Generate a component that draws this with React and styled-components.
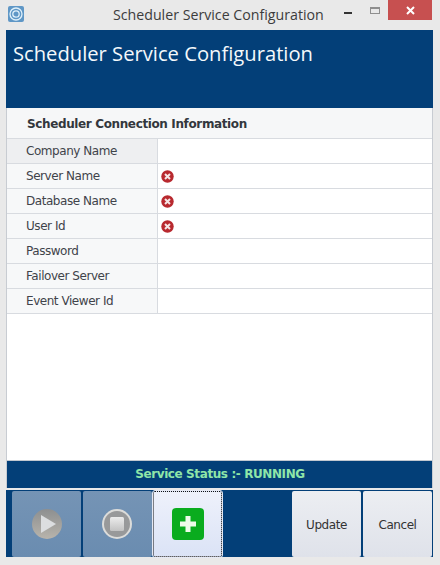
import React from "react";
import styled, { createGlobalStyle } from "styled-components";

const GlobalStyle = createGlobalStyle`
  html, body {
    margin: 0;
    padding: 0;
    background: #ececec;
  }
  #root {
    width: 440px;
    height: 565px;
    overflow: hidden;
  }
`;

const Window = styled.div`
  width: 440px;
  height: 565px;
  box-sizing: border-box;
  background: #e9e9e9;
  display: flex;
  flex-direction: column;
`;

const TitleBar = styled.div`
  height: 30px;
  flex: none;
  display: grid;
  grid-template-columns: 8px 16px 89px 224px 1fr;
  align-items: center;
`;

const AppIcon = styled.svg`
  grid-column: 2;
  width: 16px;
  height: 16px;
  margin-top: -2px;
`;

const WindowTitle = styled.div`
  grid-column: 4;
  font: 14.2px "Open Sans", sans-serif;
  color: #3c3c3c;
  white-space: nowrap;
  margin-top: -1px;
`;

const WindowButtons = styled.div`
  grid-column: 5;
  align-self: start;
  display: flex;
  align-items: flex-start;
  padding-left: 7px;
`;

const MinButton = styled.div`
  width: 8px;
  height: 2px;
  background: #333;
  margin-top: 12px;
`;

const MaxButton = styled.div`
  width: 10px;
  height: 7px;
  box-sizing: border-box;
  border: 1px solid #8f8f8f;
  border-top-width: 2px;
  margin: 7px 0 0 18px;
`;

const CloseButton = styled.div`
  width: 44px;
  height: 20px;
  margin-left: 8px;
  background: #c75050;
  color: #fff;
  display: flex;
  align-items: center;
  justify-content: center;
`;

const Content = styled.div`
  flex: 1;
  margin: 0 7px 0 6px;
  display: flex;
  flex-direction: column;
  min-height: 0;
`;

const Header = styled.div`
  height: 78px;
  flex: none;
  background: #033f78;
  color: #f4f8fb;
  font: 20.2px "Open Sans", sans-serif;
  padding: 9px 0 0 7px;
  box-sizing: border-box;
  line-height: 28px;
`;

const Panel = styled.div`
  flex: 1;
  background: #fff;
  border-left: 1px solid #c8ccd2;
  border-right: 1px solid #c8ccd2;
  min-height: 0;
  display: flex;
  flex-direction: column;
`;

const Rows = styled.div`
  flex: 1;
`;

const SectionTitle = styled.div`
  height: 31px;
  box-sizing: border-box;
  background: #f6f7f8;
  border-bottom: 1px solid #d8dbe0;
  padding: 1px 0 0 20px;
  font: bold 12px/30px "DejaVu Sans", sans-serif;
  letter-spacing: -0.37px;
  color: #33373d;
`;

const Row = styled.div`
  display: grid;
  grid-template-columns: 151px 1fr;
  height: 25px;
  box-sizing: border-box;
  border-bottom: 1px solid #d8dbe0;
`;

const Label = styled.div`
  background: ${(p) => (p.$active ? "#eeeff1" : "#f7f8f9")};
  border-right: 1px solid #d8dbe0;
  padding-left: 19px;
  font: 12px/24px "DejaVu Sans", sans-serif;
  letter-spacing: -0.45px;
  color: #3f434a;
`;

const Value = styled.div`
  display: flex;
  align-items: center;
  padding-left: 2.5px;
`;

const ErrorIcon = styled.svg`
  width: 13px;
  height: 13px;
`;

const StatusBar = styled.div`
  height: 28px;
  flex: none;
  box-sizing: border-box;
  border-top: 1px solid #c2c8d0;
  background: #033f78;
  color: #8fe6a8;
  text-align: center;
  font: bold 12px/27px "DejaVu Sans", sans-serif;
  letter-spacing: -0.4px;
  padding-left: 1px;
`;

const Toolbar = styled.div`
  height: 67px;
  flex: none;
  margin-top: 2px;
  margin-bottom: 8px;
  background: #033f78;
  display: flex;
  align-items: flex-end;
  padding: 0 1px 0 6px;
`;

const ToolButton = styled.div`
  width: 69px;
  height: 66px;
  margin-right: 1.5px;
  flex: none;
  box-sizing: border-box;
  border-radius: 2px;
  display: flex;
  align-items: center;
  justify-content: center;
  background: linear-gradient(#7594b5, #6a8cb0);
`;

const AddButton = styled(ToolButton)`
  background: linear-gradient(#eef1fb, #dbe3f6);
  border: 1px dotted #111;
  outline: 1px solid #e6e9f4;
  outline-offset: 0;
`;

const Spacer = styled.div`
  flex: 1;
`;

const ActionButton = styled.div`
  width: 69px;
  height: 66px;
  margin-left: 2px;
  flex: none;
  border-radius: 2px;
  background: linear-gradient(#eceef2, #dfe2ea);
  color: #333;
  font: 12px/68px "DejaVu Sans", sans-serif;
  letter-spacing: -0.45px;
  text-align: center;
`;

const PlayIcon = () => (
  <svg width="30" height="30" viewBox="0 0 30 30">
    <defs>
      <linearGradient id="disc" x1="0" y1="0" x2="0" y2="1">
        <stop offset="0" stopColor="#8d8f90" />
        <stop offset="1" stopColor="#b8b4ac" />
      </linearGradient>
    </defs>
    <circle cx="15" cy="15" r="15" fill="url(#disc)" />
    <path d="M9 6 L24 15 L9 24 Z" fill="#dcdee0" />
  </svg>
);

const StopIcon = () => (
  <svg width="30" height="30" viewBox="0 0 30 30">
    <defs>
      <linearGradient id="stopFace" x1="0" y1="0" x2="0" y2="1">
        <stop offset="0" stopColor="#ececec" />
        <stop offset="1" stopColor="#c2c2c2" />
      </linearGradient>
    </defs>
    <circle cx="15" cy="15" r="15" fill="#dcdcda" />
    <circle cx="15" cy="15" r="13" fill="#98999a" />
    <rect x="8" y="8" width="14" height="14" rx="1.500" fill="url(#stopFace)" />
  </svg>
);

const AddIcon = () => (
  <svg width="32" height="32" viewBox="0 0 32 32">
    <rect width="32" height="32" rx="4" fill="#0aac1e" />
    <path d="M13.500 8 h5 v5.500 h5.500 v5 h-5.500 v5.500 h-5 v-5.500 h-5.500 v-5 h5.500 z" fill="#eefbe9" />
  </svg>
);

const rows = [
  { label: "Company Name", active: true },
  { label: "Server Name", error: true },
  { label: "Database Name", error: true },
  { label: "User Id", error: true },
  { label: "Password" },
  { label: "Failover Server" },
  { label: "Event Viewer Id" },
];

export default function App() {
  return (
    <Window>
      <GlobalStyle />
      <TitleBar>
        <AppIcon viewBox="0 0 16 16">
          <rect width="16" height="16" rx="2" fill="#5f97c6" />
          <circle cx="8" cy="8" r="6" fill="none" stroke="#dff0fa" strokeWidth="1.300" />
          <circle cx="8" cy="8" r="3.200" fill="none" stroke="#dff0fa" strokeWidth="1.300" />
        </AppIcon>
        <WindowTitle>Scheduler Service Configuration</WindowTitle>
        <WindowButtons>
          <MinButton />
          <MaxButton />
          <CloseButton>
            <svg width="9" height="9" viewBox="0 0 9 9">
              <path d="M1 1 L8 8 M8 1 L1 8" stroke="#fff" strokeWidth="2" />
            </svg>
          </CloseButton>
        </WindowButtons>
      </TitleBar>
      <Content>
        <Header>Scheduler Service Configuration</Header>
        <Panel>
          <Rows>
            <SectionTitle>Scheduler Connection Information</SectionTitle>
            {rows.map((row) => (
              <Row key={row.label}>
                <Label $active={row.active}>{row.label}</Label>
                <Value>
                  {row.error && (
                    <ErrorIcon viewBox="0 0 13 13">
                      <circle cx="6.500" cy="6.500" r="6.200" fill="#b8292f" />
                      <path d="M4 4 L9 9 M9 4 L4 9" stroke="#f6e6e6" strokeWidth="2" />
                    </ErrorIcon>
                  )}
                </Value>
              </Row>
            ))}
          </Rows>
          <StatusBar>Service Status :- RUNNING</StatusBar>
        </Panel>
        <Toolbar>
          <ToolButton>
            <PlayIcon />
          </ToolButton>
          <ToolButton>
            <StopIcon />
          </ToolButton>
          <AddButton>
            <AddIcon />
          </AddButton>
          <Spacer />
          <ActionButton>Update</ActionButton>
          <ActionButton>Cancel</ActionButton>
        </Toolbar>
      </Content>
    </Window>
  );
}
